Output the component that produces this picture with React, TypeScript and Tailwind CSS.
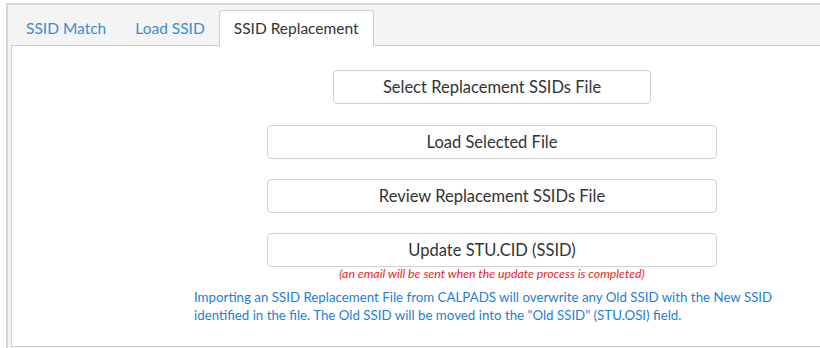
import React from "react";

const font = { fontFamily: "Lato, 'Noto Sans', sans-serif" };

function Btn({ w, children }: { w: string; children: React.ReactNode }) {
  return (
    <button
      className={`${w} h-[34px] rounded-[4px] border border-[#cfcfcf] bg-white text-[16.5px] text-[#333333] flex items-center justify-center`}
    >
      {children}
    </button>
  );
}

export default function App() {
  return (
    <div className="w-[820px] h-[348px] overflow-hidden bg-white" style={font}>
      <div className="mt-[3px] ml-[6px] h-[345px] border-2 border-r-0 border-b-0 border-[#d6d6d6] bg-[#f4f4f4] pl-[3px] pt-[5px] pb-[1px] flex flex-col">
        <div className="flex items-end h-[36px] relative z-10">
          <div className="px-[15px] h-[35px] flex items-center text-[15.5px] text-[#3a8bd4]">SSID Match</div>
          <div className="px-[14px] h-[35px] flex items-center text-[15.5px] text-[#3a8bd4]">Load SSID</div>
          <div className="px-[14px] h-[36px] flex items-center text-[15.5px] text-[#333333] bg-white border border-b-0 border-[#cccccc] rounded-t-[4px]">
            SSID Replacement
          </div>
        </div>
        <div className="-mt-px flex-1 border border-r-0 border-[#cccccc] bg-white pl-[174px] pt-[24px]">
          <div className="w-[612px] flex flex-col items-center">
            <Btn w="w-[318px]">Select Replacement SSIDs File</Btn>
            <div className="h-[21px]" />
            <Btn w="w-[450px]">Load Selected File</Btn>
            <div className="h-[20px]" />
            <Btn w="w-[450px]">Review Replacement SSIDs File</Btn>
            <div className="h-[20px]" />
            <Btn w="w-[450px]">Update STU.CID (SSID)</Btn>
            <div className="text-[12.3px] italic text-[#ee1c25] leading-[14px]">
              (an email will be sent when the update process is completed)
            </div>
            <p className="self-start ml-[8px] mt-[7px] text-[13.3px] leading-[18px] text-[#1c80d6]">
              Importing an SSID Replacement File from CALPADS will overwrite any Old SSID with the New SSID
              <br />
              identified in the file. The Old SSID will be moved into the "Old SSID" (STU.OSI) field.
            </p>
          </div>
        </div>
      </div>
    </div>
  );
}
